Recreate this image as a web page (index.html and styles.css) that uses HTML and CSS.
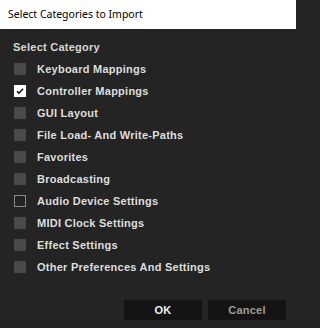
FILE: index.html
```html
<!DOCTYPE html>
<html>
<head>
<meta charset="utf-8">
<link rel="stylesheet" href="styles.css">
</head>
<body>
<div class="dialog">
  <div class="titlebar">Select Categories to Import</div>
  <div class="content">
    <div class="heading">Select Category</div>
    <ul class="list">
      <li class="row"><span class="box"></span><span class="label">Keyboard Mappings</span></li>
      <li class="row"><span class="box checked"><svg viewBox="0 0 12 12" width="12" height="12"><path d="M3 6.2 L5 8.2 L9 3.8" fill="none" stroke="#111" stroke-width="1.6"/></svg></span><span class="label">Controller Mappings</span></li>
      <li class="row"><span class="box"></span><span class="label">GUI Layout</span></li>
      <li class="row"><span class="box"></span><span class="label">File Load- And Write-Paths</span></li>
      <li class="row"><span class="box"></span><span class="label">Favorites</span></li>
      <li class="row"><span class="box"></span><span class="label">Broadcasting</span></li>
      <li class="row"><span class="box outline"></span><span class="label">Audio Device Settings</span></li>
      <li class="row"><span class="box"></span><span class="label">MIDI Clock Settings</span></li>
      <li class="row"><span class="box"></span><span class="label">Effect Settings</span></li>
      <li class="row"><span class="box"></span><span class="label">Other Preferences And Settings</span></li>
    </ul>
    <div class="buttons">
      <button class="btn ok">OK</button>
      <button class="btn cancel">Cancel</button>
    </div>
  </div>
</div>
</body>
</html>
```
FILE: styles.css
```css
html, body {
  margin: 0;
  padding: 0;
  width: 296px;
  height: 328px;
  overflow: hidden;
  background: #242424;
}
.dialog {
  width: 296px;
  height: 328px;
  display: flex;
  flex-direction: column;
}
.titlebar {
  height: 29px;
  box-sizing: border-box;
  background: #ffffff;
  color: #000000;
  font-family: "Noto Sans", "Open Sans", sans-serif;
  font-size: 10.5px;
  line-height: 28px;
  padding-left: 8px;
}
.content {
  flex: 1;
  background: #242424;
  display: flex;
  flex-direction: column;
  font-family: "Liberation Sans", Arial, sans-serif;
  font-weight: bold;
  font-size: 11px;
  letter-spacing: 0.25px;
  color: #dedede;
}
.heading {
  padding: 12px 0 0 13px;
  height: 13px;
  line-height: 13px;
  color: #d6d6d6;
}
.list {
  list-style: none;
  margin: 4px 0 0 0;
  padding: 0;
}
.row {
  height: 22px;
  display: flex;
  align-items: center;
  padding-left: 14px;
}
.box {
  width: 12px;
  height: 12px;
  box-sizing: border-box;
  background: #4a4a4a;
  margin-right: 11px;
  display: flex;
}
.box.checked {
  background: #ffffff;
}
.box.outline {
  background: transparent;
  border: 1px solid #8a8a8a;
}
.label {
  line-height: 13px;
}
.buttons {
  margin-top: auto;
  display: flex;
  justify-content: flex-end;
  gap: 6px;
  padding: 0 10px 8px 0;
}
.btn {
  width: 78px;
  height: 20px;
  border: none;
  background: #141414;
  font-family: "Liberation Sans", Arial, sans-serif;
  font-weight: bold;
  font-size: 11px;
  letter-spacing: 0.25px;
  padding: 0;
}
.ok { color: #f0f0f0; }
.cancel { color: #9c9c9c; }
```
